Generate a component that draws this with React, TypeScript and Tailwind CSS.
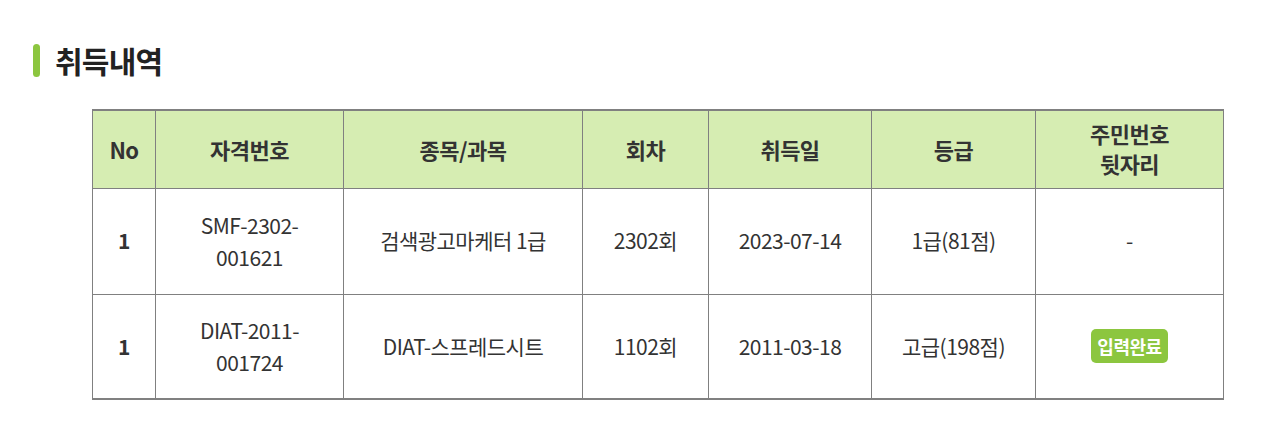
const rows = [
  {
    no: "1",
    cert: ["SMF-2302-", "001621"],
    subject: "검색광고마케터 1급",
    round: "2302회",
    date: "2023-07-14",
    grade: "1급(81점)",
    done: false,
  },
  {
    no: "1",
    cert: ["DIAT-2011-", "001724"],
    subject: "DIAT-스프레드시트",
    round: "1102회",
    date: "2011-03-18",
    grade: "고급(198점)",
    done: true,
  },
];

const cols = ["w-[63px]", "w-[188px]", "w-[239px]", "w-[126px]", "w-[163px]", "w-[164px]", "w-[188px]"];

export default function App() {
  return (
    <div className="w-[1280px] h-[438px] bg-white font-['Noto_Sans_CJK_KR','Noto_Sans',sans-serif] text-[#333]">
      {/* Title */}
      <div className="flex items-center pl-[33px] pt-[43px]">
        <span className="w-[7px] h-[33px] rounded-full bg-[#8cc63f]" />
        <h2 className="ml-[15px] text-[30px] font-bold leading-[34px] text-[#222] tracking-tight">취득내역</h2>
      </div>

      {/* Table */}
      <div className="pl-[92px] pt-[32px]">
        <table className="table-fixed border-collapse w-[1131px] text-center text-[21px] tracking-tight">
          <colgroup>
            {cols.map((c, i) => (
              <col key={i} className={c} />
            ))}
          </colgroup>
          <thead>
            <tr className="h-[78px] bg-[#d6edb2] border-t-2 border-[#808080]">
              {["No", "자격번호", "종목/과목", "회차", "취득일", "등급"].map((h) => (
                <th key={h} className="border border-[#808080] text-[22px] font-semibold text-[#333]">
                  {h}
                </th>
              ))}
              <th className="border border-[#808080] text-[22px] font-semibold text-[#333] leading-[30px] pb-[3px]">
                주민번호
                <br />
                뒷자리
              </th>
            </tr>
          </thead>
          <tbody>
            {rows.map((r, i) => (
              <tr key={i} className={i === 0 ? "h-[106px]" : "h-[105px] border-b-2 border-[#808080]"}>
                <td className="border border-[#808080] font-bold">{r.no}</td>
                <td className="border border-[#808080] leading-[32px]">
                  {r.cert[0]}
                  <br />
                  {r.cert[1]}
                </td>
                <td className="border border-[#808080]">{r.subject}</td>
                <td className="border border-[#808080]">{r.round}</td>
                <td className="border border-[#808080]">{r.date}</td>
                <td className="border border-[#808080]">{r.grade}</td>
                <td className="border border-[#808080]">
                  {r.done ? (
                    <span className="inline-block rounded-[5px] bg-[#8cc63f] px-[6px] py-[3px] text-[18px] font-bold leading-[28px] tracking-tight text-white">
                      입력완료
                    </span>
                  ) : (
                    "-"
                  )}
                </td>
              </tr>
            ))}
          </tbody>
        </table>
      </div>
    </div>
  );
}
